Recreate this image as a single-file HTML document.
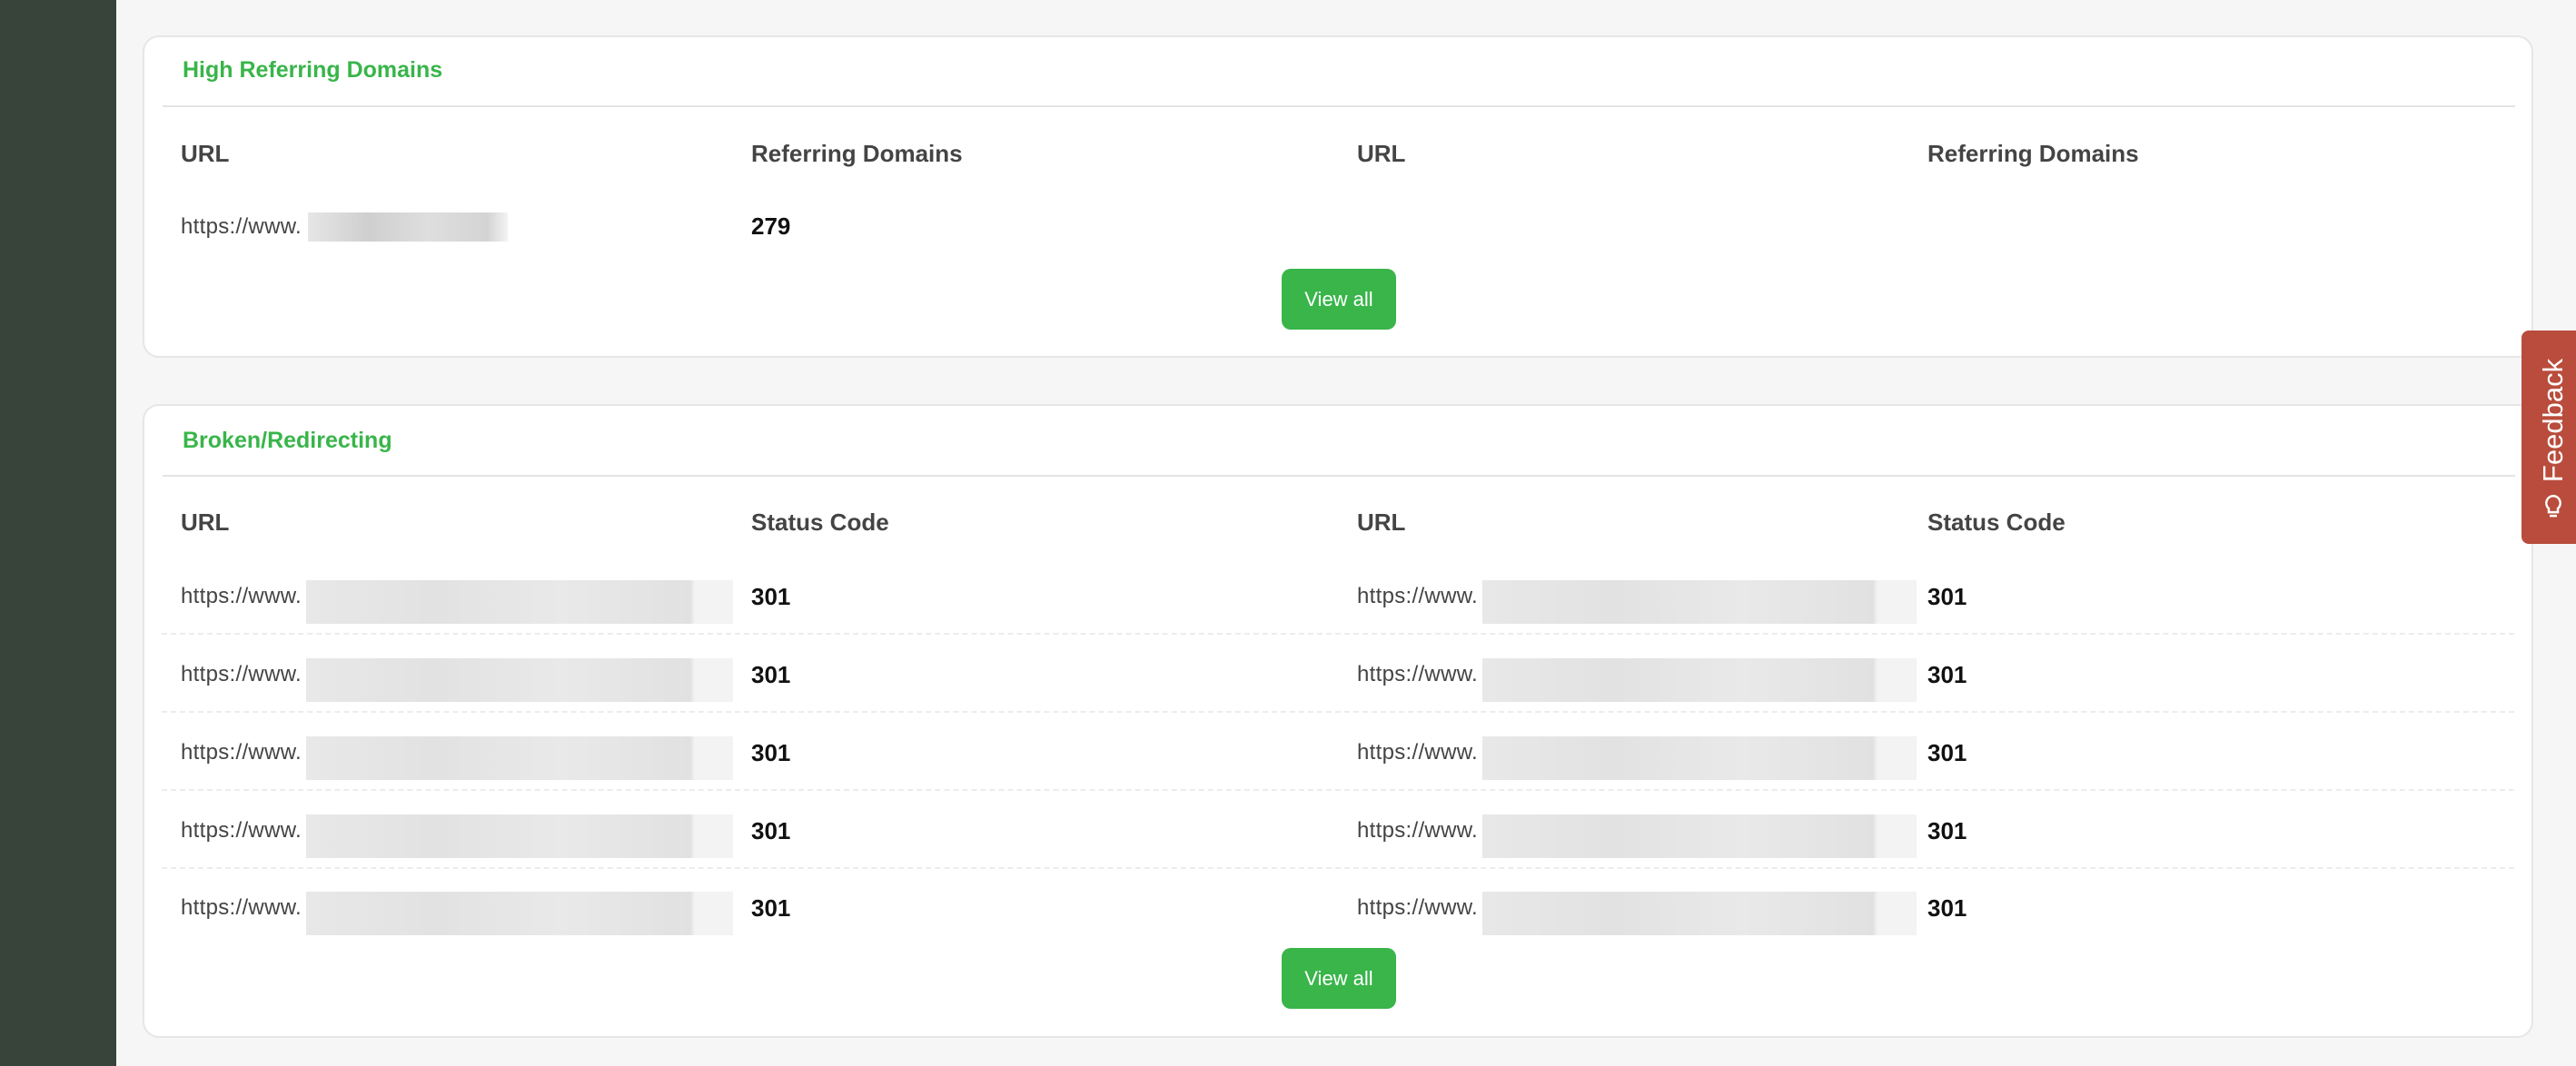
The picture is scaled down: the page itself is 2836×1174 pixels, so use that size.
<!DOCTYPE html>
<html><head><meta charset="utf-8"><style>
*{margin:0;padding:0;box-sizing:border-box}
body{width:2836px;height:1174px;background:#f6f6f6;position:relative;overflow:hidden;font-family:"Liberation Sans",Arial,sans-serif}
.side{position:absolute;left:0;top:0;width:128px;height:1174px;background:#38433a}
.card{position:absolute;left:157px;width:2632px;background:#fff;border:2px solid #e6e6e6;border-radius:18px}
.t{position:absolute;color:#39b54a;font-size:25px;font-weight:bold;left:42px}
.div{position:absolute;left:20px;right:18px;height:2px;background:#e4e4e4}
.a{position:absolute;white-space:nowrap}
.h{font-size:26px;font-weight:bold;color:#444}
.u{font-size:24px;color:#444;letter-spacing:0.3px}
.n{font-size:26px;font-weight:bold;color:#111}
.b{position:absolute;background:linear-gradient(90deg,#e8e8e8,#e2e2e2 30%,#e9e9e9 60%,#e1e1e1 90%,#f3f3f3 91%);height:50px}
.btn{position:absolute;left:1252px;width:126px;height:67px;background:#39b54a;border-radius:10px;color:#fff;font-size:22px;text-align:center;line-height:67px}
.fb{position:absolute;left:2776px;top:364px;width:70px;height:235px;background:#b94c3c;border-radius:8px 0 0 8px}
.fb .w{position:absolute;left:50%;top:50%;transform:translate(-50%,-50%) rotate(-90deg);color:#fff;font-size:31px;white-space:nowrap;display:flex;align-items:center;gap:14px}
</style></head><body>
<div class="side"></div>
<div class="card" style="top:39px;height:355px">
<div class="t" style="top:22px">High Referring Domains</div>
<div class="div" style="top:75px"></div>
<div class="a h" style="left:40px;top:113px">URL</div>
<div class="a h" style="left:668px;top:113px">Referring Domains</div>
<div class="a h" style="left:1335px;top:113px">URL</div>
<div class="a h" style="left:1963px;top:113px">Referring Domains</div>
<div class="a u" style="left:40px;top:195px">https://www.</div>
<div class="b" style="left:180px;top:193px;width:220px;height:32px;background:linear-gradient(90deg,#e6e6e6,#cfcfcf 30%,#dedede 60%,#d4d4d4 90%,#f3f3f3)"></div>
<div class="a n" style="left:668px;top:193px">279</div>
<div class="btn" style="top:255px">View all</div>
</div>
<div class="card" style="top:445px;height:698px">
<div class="t" style="top:24px">Broken/Redirecting</div>
<div class="div" style="top:76px"></div>
<div class="a h" style="left:40px;top:113px">URL</div>
<div class="a h" style="left:668px;top:113px">Status Code</div>
<div class="a h" style="left:1335px;top:113px">URL</div>
<div class="a h" style="left:1963px;top:113px">Status Code</div>
</div>
<div id="rows"></div>
<div class="fb"><div class="w"><svg width="24" height="28" viewBox="0 0 24 28" style="transform:rotate(90deg)"><path d="M12 3a8 8 0 0 0-5 14v4h10v-4a8 8 0 0 0-5-14z M8 25h8" fill="none" stroke="#fff" stroke-width="2.5"/></svg><span>Feedback</span></div></div>
<script>
var ys=[657,743,829,915,1000],h='';
ys.forEach(function(y,i){
h+='<div class="a u" style="left:199px;top:'+(y-14)+'px">https://www.</div>';
h+='<div class="b" style="left:337px;top:'+(y-18)+'px;width:470px;height:48px"></div>';
h+='<div class="a n" style="left:827px;top:'+(y-15)+'px">301</div>';
h+='<div class="a u" style="left:1494px;top:'+(y-14)+'px">https://www.</div>';
h+='<div class="b" style="left:1632px;top:'+(y-18)+'px;width:478px;height:48px"></div>';
h+='<div class="a n" style="left:2122px;top:'+(y-15)+'px">301</div>';
if(i<4)h+='<div class="a" style="left:178px;width:2590px;top:'+(y+40)+'px;border-top:2px dashed #ececec"></div>';
});
h+='<div class="btn" style="left:1411px;top:1044px">View all</div>';
document.getElementById('rows').innerHTML=h;
</script>
</body></html>
